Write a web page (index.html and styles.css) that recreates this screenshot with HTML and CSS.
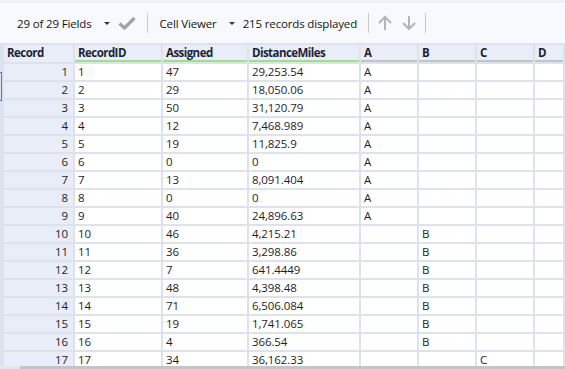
FILE: index.html
```html
<!DOCTYPE html>
<html lang="en">

<head>
    <meta charset="UTF-8">
    <title>Results</title>
    <link rel="stylesheet" href="styles.css">
</head>

<body>
    <div class="toolbar">
        <span class="tb-text">29 of 29 Fields</span>
        <span class="caret"></span>
        <svg class="tb-icon check" width="18" height="14" viewBox="0 0 18 14">
            <path d="M1.5 7.5 L6.5 12 L16.5 2" fill="none" stroke="#a3a3a3" stroke-width="3.2" />
        </svg>
        <span class="sep"></span>
        <span class="tb-text">Cell Viewer</span>
        <span class="caret"></span>
        <span class="tb-text">215 records displayed</span>
        <span class="sep sep-nav"></span>
        <svg class="tb-icon" width="16" height="16" viewBox="0 0 16 16">
            <path d="M8 15 V2 M2 8 L8 2 L14 8" fill="none" stroke="#b4b4b4" stroke-width="2" />
        </svg>
        <svg class="tb-icon" width="16" height="16" viewBox="0 0 16 16">
            <path d="M8 1 V14 M2 8 L8 14 L14 8" fill="none" stroke="#b4b4b4" stroke-width="2" />
        </svg>
        <span class="sep"></span>
    </div>

    <div class="grid-wrap">
        <span class="sel-mark"></span>
        <table class="grid">
            <colgroup>
                <col class="c-rec">
                <col class="c-id">
                <col class="c-asg">
                <col class="c-dist">
                <col class="c-str">
                <col class="c-str">
                <col class="c-str">
                <col class="c-last">
            </colgroup>
            <thead>
                <tr>
                    <th class="rec-h">Record</th>
                    <th class="num-field">RecordID</th>
                    <th class="num-field">Assigned</th>
                    <th class="num-field">DistanceMiles</th>
                    <th class="str-field">A</th>
                    <th class="str-field">B</th>
                    <th class="str-field">C</th>
                    <th class="str-field">D</th>
                </tr>
            </thead>
            <tbody id="rows"></tbody>
        </table>
        <div class="hscroll"><span class="thumb"></span></div>
    </div>

    <script>
        const data = [
            [47, '29,253.54', 'A'], [29, '18,050.06', 'A'], [50, '31,120.79', 'A'],
            [12, '7,468.989', 'A'], [19, '11,825.9', 'A'], [0, '0', 'A'],
            [13, '8,091.404', 'A'], [0, '0', 'A'], [40, '24,896.63', 'A'],
            [46, '4,215.21', 'B'], [36, '3,298.86', 'B'], [7, '641.4449', 'B'],
            [48, '4,398.48', 'B'], [71, '6,506.084', 'B'], [19, '1,741.065', 'B'],
            [4, '366.54', 'B'], [34, '36,162.33', 'C']
        ];
        const body = document.getElementById('rows');
        data.forEach((d, i) => {
            const n = i + 1;
            const tr = document.createElement('tr');
            const letters = ['A', 'B', 'C', 'D'].map(l => '<td>' + (d[2] === l ? l : '') + '</td>').join('');
            tr.innerHTML = '<td class="rec">' + n + '</td><td>' + n + '</td><td>' + d[0] + '</td><td>' + d[1] + '</td>' + letters;
            body.appendChild(tr);
        });
    </script>
</body>

</html>
```
FILE: styles.css
```css
body {
    margin: 0;
    padding: 0;
    width: 565px;
    height: 369px;
    overflow: hidden;
    font-family: "Open Sans", "Noto Sans", sans-serif;
    font-size: 11.5px;
    color: #1e1e1e;
    background-color: #fff;
}

.toolbar {
    height: 40px;
    border-top: 3px solid #eef1f8;
    background-color: #f8f9fd;
    display: flex;
    align-items: center;
    padding-left: 17px;
}

.tb-text {
    color: #151515;
    letter-spacing: -0.15px;
}

.caret {
    width: 0;
    height: 0;
    border-left: 3px solid transparent;
    border-right: 3px solid transparent;
    border-top: 3px solid #333;
    margin: 1px 8px 0 12px;
}

.tb-icon {
    margin-right: 8px;
}

.check {
    margin-left: 0;
    margin-right: 11px;
}

.sep {
    width: 1px;
    height: 20px;
    background-color: #c9c9c9;
    margin: 0 12px 0 0;
}

.tb-text + .sep {
    margin-left: 11px;
}

.sep-nav {
    margin-right: 8px;
}

.grid-wrap {
    position: relative;
    background-color: #dce3ef;
    height: 326px;
    padding-left: 2px;
}

.sel-mark {
    position: absolute;
    left: 0;
    top: 29px;
    width: 1px;
    height: 27px;
    border: 1px solid #3c82d2;
    border-left: none;
}

.grid {
    table-layout: fixed;
    border-collapse: separate;
    border-spacing: 2px;
    width: 563px;
}

.c-rec { width: 69px; }
.c-id { width: 86px; }
.c-asg { width: 84px; }
.c-dist { width: 110px; }
.c-str { width: 56px; }
.c-last { width: 28px; }

.grid th,
.grid td {
    padding: 0 0 0 3px;
    height: 16px;
    line-height: 16px;
    white-space: nowrap;
    overflow: hidden;
    text-align: left;
    letter-spacing: -0.1px;
}

.grid th {
    background-color: #e8edf7;
    font-weight: bold;
    color: #1b2436;
    height: 14px;
    line-height: 15px;
    letter-spacing: -0.55px;
    border-bottom: 2px solid transparent;
}

.grid th.num-field {
    border-bottom-color: #9de27f;
}

.grid th.str-field {
    border-bottom-color: #c3c3c3;
}

.grid th.rec-h {
    border-bottom-color: #e8edf7;
}

.grid td {
    background-color: #fff;
}

.grid td.rec {
    background-color: #e8edf7;
    text-align: right;
    padding: 0 5px 0 0;
}

.hscroll {
    position: absolute;
    left: 0;
    right: 0;
    bottom: 0;
    height: 3px;
    background-color: #e6e6e6;
}

.thumb {
    position: absolute;
    left: 20px;
    right: 0;
    top: 0;
    bottom: 0;
    background-color: #c4c4c4;
}
```
